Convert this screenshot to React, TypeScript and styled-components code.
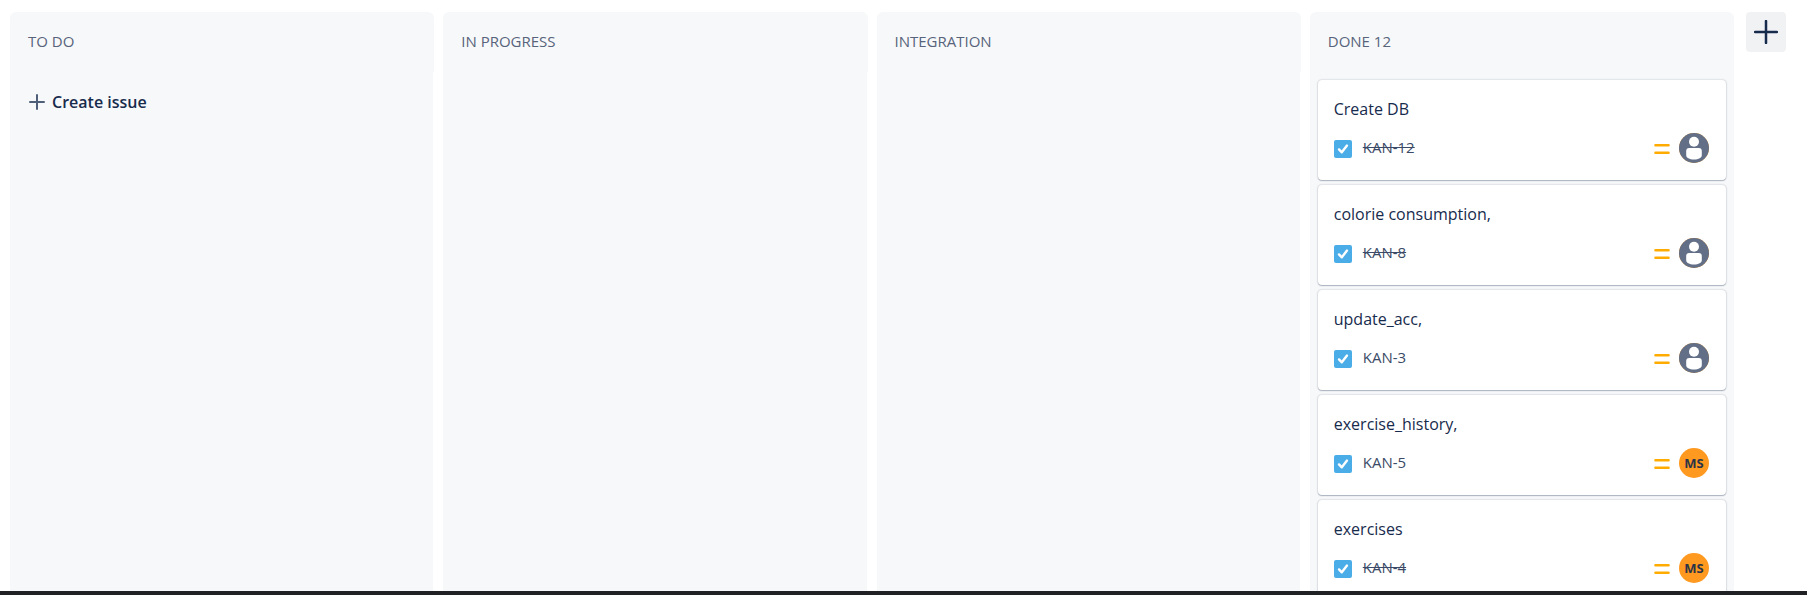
import React from "react";
import styled, { createGlobalStyle } from "styled-components";

const GlobalStyle = createGlobalStyle`
  * { box-sizing: border-box; }
  body {
    margin: 0;
    background: #fff;
    color: #172b4d;
    font-family: "Segoe UI", "Open Sans", "Noto Sans", sans-serif;
  }
`;

const Page = styled.div`
  height: 100vh;
  display: flex;
  flex-direction: column;
  overflow: hidden;
`;

const Board = styled.main`
  flex: 1;
  min-height: 0;
  display: flex;
  gap: 12px;
  padding: 12px 21px 0 10px;
`;

const Columns = styled.div`
  flex: 1;
  display: grid;
  grid-template-columns: repeat(4, minmax(0, 1fr));
  grid-template-rows: minmax(0, 1fr);
  gap: 9px;
`;

const Column = styled.section`
  display: flex;
  flex-direction: column;
  min-height: 0;
`;

const ColumnHeader = styled.header`
  flex: none;
  height: 60px;
  padding: 17px 18px 0;
  border-radius: 6px 6px 0 0;
  background: #f7f8f9;
`;

const ColumnTitle = styled.h2`
  margin: 0;
  font-size: 15px;
  line-height: 24px;
  font-weight: 400;
  color: #57647c;
  text-transform: uppercase;
`;

const ColumnBody = styled.div<{ $filled?: boolean }>`
  flex: 1;
  min-height: 0;
  overflow: hidden;
  margin-right: ${(p) => (p.$filled ? 0 : 1)}px;
  padding: 8px;
  background: #f7f8f9;
`;

const CardList = styled.ul`
  display: flex;
  flex-direction: column;
  gap: 5px;
  margin: 0;
  padding: 0;
  list-style: none;
`;

const Card = styled.li`
  height: 100px;
  padding: 16px 17px 0 16px;
  border-radius: 4px;
  background: #fff;
  box-shadow: 0 1px 1px rgba(9, 30, 66, 0.25), 0 0 2px rgba(9, 30, 66, 0.31);
`;

const CardTitle = styled.p`
  margin: 0 0 11px;
  font-size: 16px;
  line-height: 26px;
  font-weight: 400;
`;

const CardFooter = styled.div`
  display: flex;
  align-items: center;
  height: 30px;
`;

const IssueKey = styled.a<{ $resolved?: boolean }>`
  margin: 0 auto 0 11px;
  padding-bottom: 2px;
  font-size: 15px;
  line-height: 20px;
  font-weight: 400;
  color: #3b4b67;
  text-decoration: ${(p) => (p.$resolved ? "line-through" : "none")};
`;

const Glyph = styled.svg`
  flex: none;
  margin-top: 2px;
`;

const Avatar = styled.span`
  display: flex;
  align-items: center;
  justify-content: center;
  width: 30px;
  height: 30px;
  margin-left: 9px;
  border-radius: 50%;
  background: #ff991f;
  color: #2b3446;
  font-size: 13px;
  font-weight: 700;
`;

const CreateButton = styled.button`
  display: flex;
  align-items: center;
  gap: 7px;
  height: 44px;
  padding: 0 11px;
  border: 0;
  background: transparent;
  color: #172b4d;
  font: inherit;
  font-size: 16px;
  font-weight: 600;
`;

const AddColumnButton = styled.button`
  flex: none;
  display: flex;
  align-items: center;
  justify-content: center;
  width: 40px;
  height: 40px;
  padding: 0;
  border: 0;
  border-radius: 4px;
  background: #f1f2f4;
`;

const BottomBar = styled.div`
  flex: none;
  height: 4px;
  background: #202124;
`;

const TaskIcon = () => (
  <Glyph width="18" height="18" viewBox="0 0 18 18" role="img" aria-label="Task">
    <rect width="18" height="18" rx="2" fill="#4bade8" />
    <path d="M5 9.4l2.8 2.9L13 5.6" fill="none" stroke="#fff" strokeWidth="2.4" strokeLinecap="round" strokeLinejoin="round" />
  </Glyph>
);

const PriorityIcon = () => (
  <Glyph width="16" height="12" viewBox="0 0 16 12" role="img" aria-label="Medium priority">
    <path d="M1.5 2.2h13M1.5 9.8h13" fill="none" stroke="#ffab00" strokeWidth="2.6" strokeLinecap="round" />
  </Glyph>
);

const PersonIcon = () => (
  <svg width="30" height="30" viewBox="0 0 30 30" role="img" aria-label="Unassigned">
    <circle cx="15" cy="15" r="15" fill="#626f86" />
    <circle cx="15" cy="8.8" r="5" fill="#fff" />
    <path d="M7.200 18a3 3 0 0 1 3-3h9.600a3 3 0 0 1 3 3v4.200c0 2.600-3.200 4.200-7.800 4.200s-7.800-1.600-7.800-4.200z" fill="#fff" />
  </svg>
);

const PlusIcon = ({ size, color, width }: { size: number; color: string; width: number }) => (
  <svg width={size} height={size} viewBox={`0 0 ${size} ${size}`} aria-hidden="true">
    <path
      d={`M${size / 2} 1V${size - 1}M1 ${size / 2}H${size - 1}`}
      fill="none"
      stroke={color}
      strokeWidth={width}
      strokeLinecap="round"
    />
  </svg>
);

type Issue = { key: string; title: string; resolved?: boolean; assignee?: string };

const doneIssues: Issue[] = [
  { key: "KAN-12", title: "Create DB", resolved: true },
  { key: "KAN-8", title: "colorie consumption,", resolved: true },
  { key: "KAN-3", title: "update_acc," },
  { key: "KAN-5", title: "exercise_history,", assignee: "MS" },
  { key: "KAN-4", title: "exercises", resolved: true, assignee: "MS" },
];

const IssueCard = ({ issue }: { issue: Issue }) => (
  <Card>
    <CardTitle>{issue.title}</CardTitle>
    <CardFooter>
      <TaskIcon />
      <IssueKey href={`#${issue.key}`} $resolved={issue.resolved}>
        {issue.key}
      </IssueKey>
      <PriorityIcon />
      <Avatar>{issue.assignee ?? <PersonIcon />}</Avatar>
    </CardFooter>
  </Card>
);

export default function App() {
  return (
    <Page>
      <GlobalStyle />
      <Board>
        <Columns>
          <Column>
            <ColumnHeader>
              <ColumnTitle>To do</ColumnTitle>
            </ColumnHeader>
            <ColumnBody>
              <CreateButton type="button">
                <PlusIcon size={16} color="#505f79" width={2} />
                Create issue
              </CreateButton>
            </ColumnBody>
          </Column>
          <Column>
            <ColumnHeader>
              <ColumnTitle>In progress</ColumnTitle>
            </ColumnHeader>
            <ColumnBody />
          </Column>
          <Column>
            <ColumnHeader>
              <ColumnTitle>Integration</ColumnTitle>
            </ColumnHeader>
            <ColumnBody />
          </Column>
          <Column>
            <ColumnHeader>
              <ColumnTitle>Done 12</ColumnTitle>
            </ColumnHeader>
            <ColumnBody $filled>
              <CardList>
                {doneIssues.map((issue) => (
                  <IssueCard key={issue.key} issue={issue} />
                ))}
              </CardList>
            </ColumnBody>
          </Column>
        </Columns>
        <AddColumnButton type="button" aria-label="Create column">
          <PlusIcon size={24} color="#172b4d" width={2.5} />
        </AddColumnButton>
      </Board>
      <BottomBar />
    </Page>
  );
}
